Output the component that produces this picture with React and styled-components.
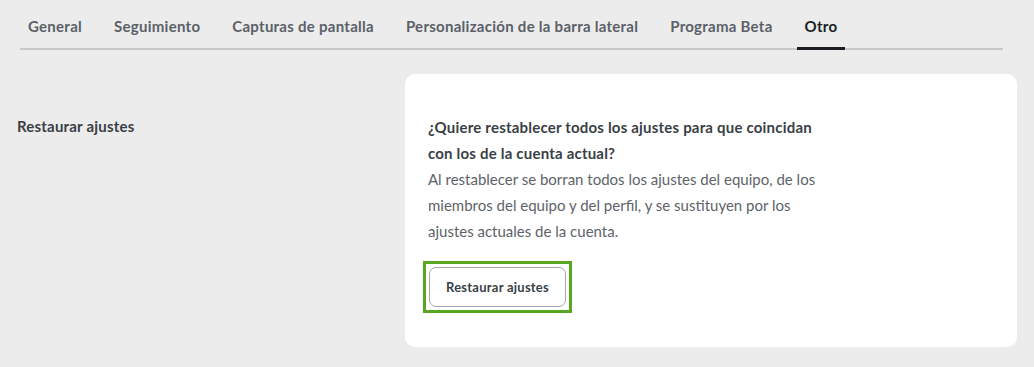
import React from "react";
import styled, { createGlobalStyle } from "styled-components";

const Global = createGlobalStyle`
  html, body { margin: 0; padding: 0; background: #ebeceb; }
  body { font-family: "Lato", "Noto Sans", sans-serif; -webkit-font-smoothing: antialiased; }
`;

const Page = styled.div`
  width: 1034px;
  height: 367px;
  background: #ebeceb;
  box-sizing: border-box;
  padding: 0 0 0 17px;
`;

const Tabs = styled.nav`
  display: flex;
  gap: 16px;
  margin: 0 31px 0 3px;
  height: 50px;
  border-bottom: 2px solid #c6c8ca;
  box-sizing: border-box;
  align-items: stretch;
`;

const Tab = styled.div`
  position: relative;
  padding: 17px 8px 0;
  font-size: 15px;
  font-weight: 700;
  letter-spacing: 0.27px;
  color: ${(p) => (p.$active ? "#1b1f24" : "#5b6068")};
  white-space: nowrap;
  &::after {
    content: "";
    display: ${(p) => (p.$active ? "block" : "none")};
    position: absolute;
    left: 0;
    right: 0;
    bottom: -2px;
    height: 3px;
    background: #1b1f24;
  }
`;

const Section = styled.div`
  display: flex;
  margin-top: 24px;
`;

const Label = styled.div`
  width: 388px;
  padding-top: 43px;
  font-size: 15px;
  font-weight: 700;
  letter-spacing: 0.2px;
  color: #3a3f46;
`;

const Card = styled.div`
  width: 612px;
  height: 273px;
  background: #fff;
  border-radius: 10px;
  box-sizing: border-box;
  padding: 40px 23px 0;
`;

const Text = styled.div`
  width: 400px;
  font-size: 15px;
  line-height: 26px;
  color: #5e636a;
`;

const Heading = styled.div`
  font-weight: 700;
  letter-spacing: 0.2px;
  color: #3a3f46;
`;

const Focus = styled.div`
  display: inline-flex;
  margin-top: 17px;
  margin-left: -5px;
  padding: 3px;
  border: 3px solid #57a820;
`;

const Button = styled.button`
  width: 137px;
  height: 40px;
  border: 1px solid #a3a5a8;
  border-radius: 7px;
  background: #fff;
  font-family: inherit;
  font-size: 13px;
  font-weight: 700;
  letter-spacing: 0.25px;
  color: #3a3f46;
  cursor: pointer;
`;

const tabs = [
  "General",
  "Seguimiento",
  "Capturas de pantalla",
  "Personalización de la barra lateral",
  "Programa Beta",
  "Otro",
];

export default function App() {
  return (
    <Page>
      <Global />
      <Tabs>
        {tabs.map((t) => (
          <Tab key={t} $active={t === "Otro"}>
            {t}
          </Tab>
        ))}
      </Tabs>
      <Section>
        <Label>Restaurar ajustes</Label>
        <Card>
          <Text>
            <Heading>
              ¿Quiere restablecer todos los ajustes para que coincidan con los de la cuenta actual?
            </Heading>
            Al restablecer se borran todos los ajustes del equipo, de los miembros del equipo y del
            perfil, y se sustituyen por los ajustes actuales de la cuenta.
          </Text>
          <Focus>
            <Button>Restaurar ajustes</Button>
          </Focus>
        </Card>
      </Section>
    </Page>
  );
}
